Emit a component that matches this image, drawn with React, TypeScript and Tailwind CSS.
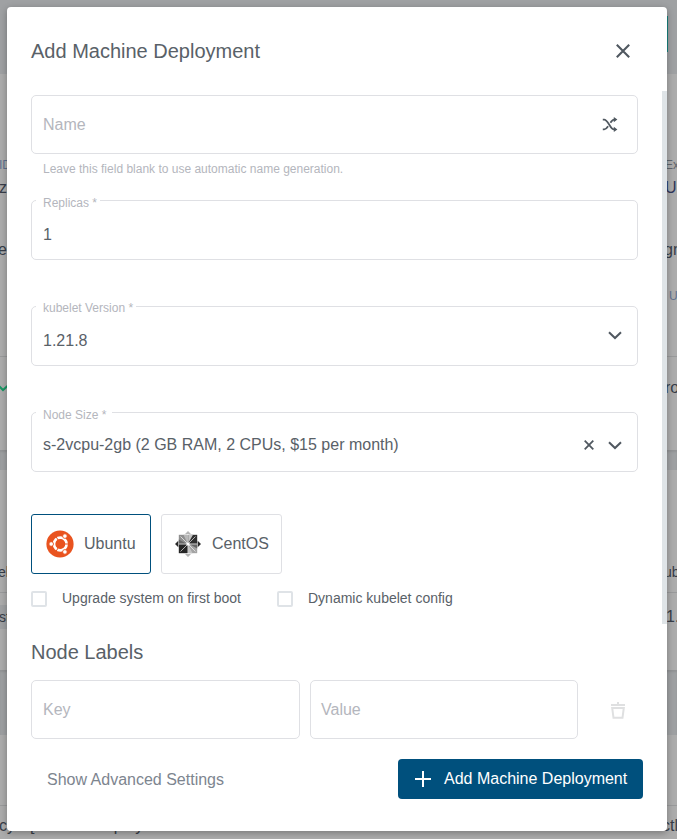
import React from "react";

function Notched({
  label,
  labelClass = "left-[4px] -top-[5px] pr-[3px]",
  children,
}: {
  label: string;
  labelClass?: string;
  children: React.ReactNode;
}) {
  return (
    <div className="relative flex h-[60px] items-center rounded-[5px] border border-[#dfe0e4] px-[11px]">
      <span
        className={`absolute h-3 bg-white pl-[7px] text-[12px] leading-[14px] text-[#b4b6bd] ${labelClass}`}
      >
        {label}
      </span>
      {children}
    </div>
  );
}

function Chevron() {
  return (
    <svg width="14" height="9" viewBox="0 0 14 9" fill="none" stroke="#505860" strokeWidth="2">
      <path d="M1 1.2 L7 7 L13 1.2" />
    </svg>
  );
}

function Shuffle() {
  return (
    <svg className="-mt-px" width="16" height="15" viewBox="0 0 16 15" fill="none" stroke="#505860" strokeWidth="1.8">
      <path d="M0.8 2.6 H2.2 C4 2.6 5 4.2 7.2 7.5 C9.3 10.9 10 12.4 12 12.4 H13" />
      <path d="M0.8 12.4 H2.2 C3.9 12.4 4.8 11.2 6.1 9.2 M8.4 5.8 C9.9 3.5 10.5 2.6 12 2.6 H13" />
      <path d="M11.8 0 L15.4 2.6 L11.8 5.2 Z M11.8 9.8 L15.4 12.4 L11.8 15 Z" fill="#505860" stroke="none" />
    </svg>
  );
}

function UbuntuLogo() {
  return (
    <svg width="28" height="28" viewBox="0 0 28 28" fill="none">
      <circle cx="14" cy="14" r="13.6" fill="#e9531f" />
      <circle cx="14.3" cy="14" r="6.3" stroke="#fff" strokeWidth="2.7" />
      <path d="M14.3 14 L23 14 M14.3 14 L10 6.5 M14.3 14 L10 21.5" stroke="#e9531f" strokeWidth="1" />
      <circle cx="14.3" cy="14" r="4.5" fill="#e9531f" />
      <g fill="#fff" stroke="#e9531f" strokeWidth="0.9">
        <circle cx="5.2" cy="14" r="2.3" />
        <circle cx="18.9" cy="6.1" r="2.3" />
        <circle cx="18.9" cy="21.9" r="2.3" />
      </g>
    </svg>
  );
}

function CentosLogo() {
  return (
    <svg width="26" height="26" viewBox="0 0 26 26">
      <path d="M13 0 L16 3 H10 Z M13 26 L16 23 H10 Z" fill="#b5b5b5" />
      <path d="M0 13 L3.3 9.7 V16.3 Z M26 13 L22.7 9.7 V16.3 Z" fill="#292929" />
      <path d="M3.8 3.8 H12.6 V12.6 H3.8 Z" fill="#8f8f8f" />
      <path d="M8.5 3.8 H12.6 V12.6 Z" fill="#b8b8b8" />
      <path d="M13.4 3.8 H22.2 V12.6 H13.4 Z" fill="#303030" />
      <path d="M13.4 3.8 H18 L13.4 12 Z" fill="#c4c4c4" />
      <path d="M3.8 13.4 H12.6 V22.2 H3.8 Z" fill="#262626" />
      <path d="M13.4 13.4 H22.2 V22.2 H13.4 Z" fill="#a3a3a3" />
      <path d="M13.4 14 L17.5 22.2 H13.4 Z" fill="#c4c4c4" />
      <path d="M3.8 8.6 V12.6 H11 Z M22.2 17.4 V13.4 H15 Z" fill="#666" />
      <path d="M5.5 5.5 L20.5 20.5 M20.5 5.5 L5.5 20.5" stroke="#fff" strokeWidth="0.8" opacity="0.8" />
      <circle cx="13" cy="13" r="1.6" fill="#fff" />
    </svg>
  );
}

function Backdrop() {
  return (
    <div className="flex h-full flex-col overflow-hidden bg-[#acacac] text-[16px] leading-5 text-[#373d48]">
      <div className="flex h-[74px] shrink-0 justify-end bg-[#9fa1a3] pt-4">
        <div className="mr-[9px] h-9 w-[20px] rounded-l bg-[#16837f]" />
      </div>
      <div className="flex h-[376px] shrink-0 flex-col">
        <div className="mt-[81px] flex h-5 justify-between text-[12px] text-[#5f7190]">
          <span className="-ml-px">ID</span><span className="w-[12px] text-[#60656d]">Ex</span>
        </div>
        <div className="mt-[3px] flex h-5 justify-between">
          <span className="-ml-px">z</span><span className="w-[12px] text-[#2f365a]">Ur</span>
        </div>
        <div className="mt-[42px] flex h-5 justify-between">
          <span className="-ml-[2px]">e</span><span className="w-[13px]">gn</span>
        </div>
        <div className="mt-[26px] flex h-5 justify-end text-[12px] text-[#5f7190]">
          <span className="w-[8px]">U</span>
        </div>
        <div className="mt-[50px] h-px shrink-0 bg-[#999a9b]" />
        <div className="mt-[21px] flex h-5 items-center justify-between">
          <svg width="10" height="7" viewBox="0 0 10 7" fill="none" stroke="#189563" strokeWidth="2">
            <path d="M-2 0 L3 5 L8 0.5" />
          </svg>
          <span className="w-[12px]">ro</span>
        </div>
      </div>
      <div className="h-5 shrink-0 bg-[#9fa1a3] shadow-[inset_0_2px_2px_#929496]" />
      <div className="flex h-[200px] shrink-0 flex-col">
        <div className="mt-[92px] flex h-5 justify-between text-[14px]">
          <span className="-ml-[2px]">el</span><span className="w-[13px]">ub</span>
        </div>
        <div className="mt-[10px] h-px shrink-0 bg-[#999a9b]" />
        <div className="mt-3 flex h-6 items-center justify-between">
          <div className="w-10 bg-[#9fa1a3] text-[14px] leading-6"><span className="-ml-px">st</span></div>
          <span className="w-[11px]">1.</span>
        </div>
      </div>
      <div className="h-[65px] shrink-0 bg-[#9fa1a3] shadow-[inset_0_2px_2px_#929496]" />
      <div className="flex h-[104px] shrink-0 flex-col">
        <div className="mt-[70px] h-px shrink-0 bg-[#999a9b]" />
        <div className="mt-[10px] flex h-5 justify-between">
          <div className="flex">
            <span className="-ml-px w-[31px]">cy</span>
            <span className="w-[66px]">[labels</span>
            <span>deploy</span>
          </div>
          <span className="w-[15px]">ctl</span>
        </div>
      </div>
    </div>
  );
}

export default function App() {
  return (
    <div className="relative h-[839px] w-[677px] overflow-hidden font-['Liberation_Sans',Arial,sans-serif] text-[#596168]">
      <Backdrop />
      <div className="absolute left-[7px] top-[7px] flex h-[824px] w-[660px] flex-col rounded bg-white shadow-[0_2px_7px_rgba(0,0,0,0.3)]">
        <header className="flex h-[84px] shrink-0 items-center justify-between pl-6 pr-[37px]">
          <h1 className="mt-[4px] text-[20px] leading-6">Add Machine Deployment</h1>
          <svg className="mt-[4px]" width="14" height="14" viewBox="0 0 14 14" stroke="#505860" strokeWidth="2.1">
            <path d="M0.8 0.8 L13.2 13.2 M13.2 0.8 L0.8 13.2" />
          </svg>
        </header>

        <div className="flex h-[648px] shrink-0">
          <main className="flex w-[631px] shrink-0 flex-col pl-6 pt-1">
            <div className="flex h-[59px] items-center justify-between rounded-[5px] border border-[#dfe0e4] pl-[11px] pr-[19px] text-[16px] text-[#b4b6bd]">
              <span>Name</span>
              <Shuffle />
            </div>
            <p className="mt-[7px] pl-3 text-[12px] leading-4 text-[#b4b6bd]">
              Leave this field blank to use automatic name generation.
            </p>
            <div className="mt-[23px] flex flex-col gap-[46px] text-[16px]">
              <Notched label="Replicas *"><span className="mt-[9px]">1</span></Notched>
              <Notched label="kubelet Version *" labelClass="left-[4px] -top-[6px] pr-[3px]">
                <span className="mt-[9px] flex-1">1.21.8</span>
                <span className="-mt-[2px] mr-[4px]"><Chevron /></span>
              </Notched>
              <Notched label="Node Size *" labelClass="left-[4px] -top-[5px] pr-[6px]">
                <span className="mt-[5px] flex-1">s-2vcpu-2gb (2 GB RAM, 2 CPUs, $15 per month)</span>
                <svg className="mr-[14px] mt-[5px]" width="10" height="10" viewBox="0 0 10 10" stroke="#505860" strokeWidth="1.8">
                  <path d="M0.7 0.7 L9.3 9.3 M9.3 0.7 L0.7 9.3" />
                </svg>
                <span className="mr-[4px] mt-[6px]"><Chevron /></span>
              </Notched>
            </div>

            <div className="mt-[42px] flex gap-[10px] text-[16px]">
              <div className="flex h-[60px] w-[120px] items-center rounded-[3px] border border-[#00507d] pl-[14px]">
                <UbuntuLogo /><span className="ml-[10px]">Ubuntu</span>
              </div>
              <div className="flex h-[60px] w-[121px] items-center rounded-[3px] border border-[#dfe0e4] pl-[13px]">
                <CentosLogo /><span className="ml-[11px]">CentOS</span>
              </div>
            </div>

            <div className="mt-[15px] flex h-[18px] items-center text-[14px]">
              <span className="mt-px h-4 w-4 rounded-[2px] border-2 border-[#dfe3e7]" />
              <span className="ml-[15px] w-[215px]">Upgrade system on first boot</span>
              <span className="mt-px h-4 w-4 rounded-[2px] border-2 border-[#dfe3e7]" />
              <span className="ml-[15px]">Dynamic kubelet config</span>
            </div>

            <h2 className="mt-[33px] text-[20px] leading-6">Node Labels</h2>
            <div className="mt-[16px] flex items-center text-[16px] text-[#b4b6bd]">
              <div className="flex h-[59px] w-[269px] items-center rounded-[5px] border border-[#dfe0e4] pl-[11px]">Key</div>
              <div className="ml-[10px] flex h-[59px] w-[268px] items-center rounded-[5px] border border-[#dfe0e4] pl-[10px]">Value</div>
              <svg className="ml-[33px] mt-[2px]" width="14" height="17" viewBox="0 0 14 17" fill="none" stroke="#dfe0e1" strokeWidth="2">
                <path d="M0 3 H14 M7 0 V3" />
                <path d="M1.2 6 H12.8 L11.5 15.8 H2.5 Z" />
              </svg>
            </div>
          </main>
          <div className="ml-auto h-[533px] w-[5px] bg-[#dfe4e7]" />
        </div>

        <footer className="flex items-center justify-between pl-10 pr-6 pt-[20px]">
          <span className="mt-[2px] text-[16px] text-[#7d858f]">Show Advanced Settings</span>
          <button className="flex h-10 w-[245px] items-center rounded bg-[#00507d] pl-[17px] text-[16px] text-white">
            <svg width="16" height="16" viewBox="0 0 16 16" stroke="#fff" strokeWidth="2">
              <path d="M8 0 V16 M0 8 H16" />
            </svg>
            <span className="ml-[13px]">Add Machine Deployment</span>
          </button>
        </footer>
      </div>
    </div>
  );
}
